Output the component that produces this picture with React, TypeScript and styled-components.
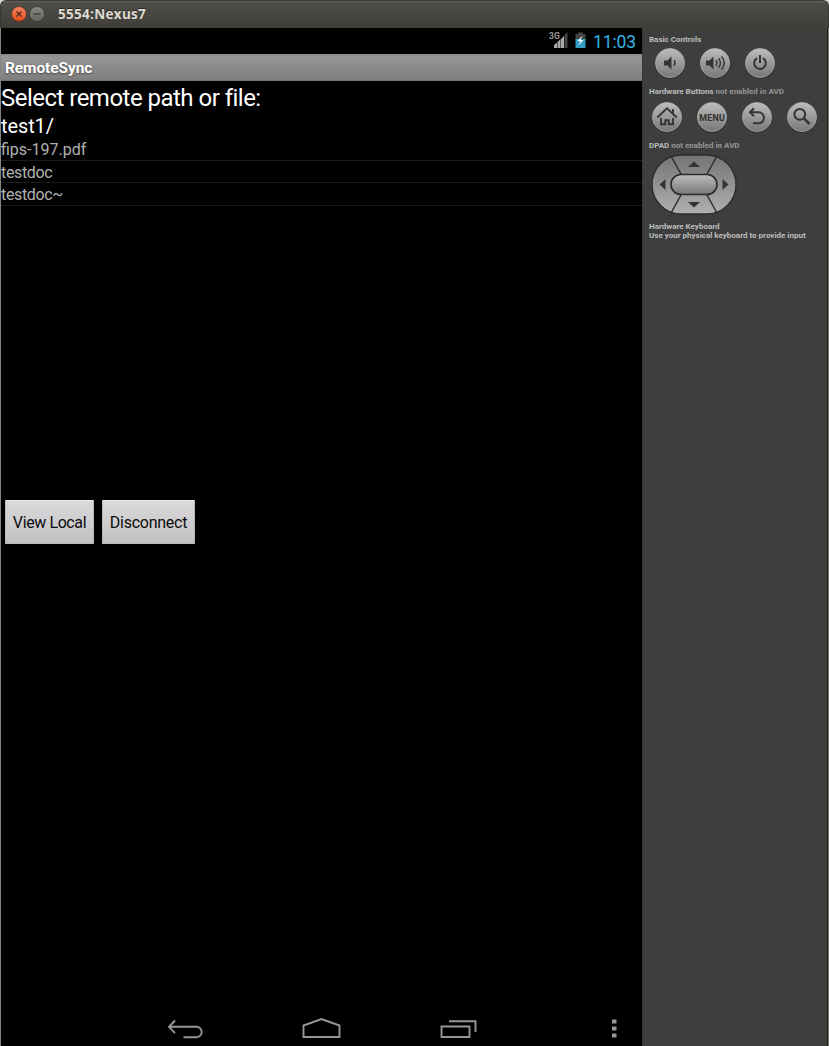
import React from 'react';
import styled, { createGlobalStyle } from 'styled-components';

const Global = createGlobalStyle`
  * { box-sizing: border-box; }
  body { margin: 0; background: #d8d8d8; font-family: Roboto, sans-serif; }
`;

const Window = styled.div`
  width: 829px;
  height: 1046px;
  display: flex;
  flex-direction: column;
  overflow: hidden;
  white-space: nowrap;
`;

const TitleBar = styled.header`
  height: 28px;
  flex: none;
  display: flex;
  align-items: center;
  padding: 0 0 1px 10px;
  border: 1px solid #3a3934;
  border-bottom: 0;
  border-radius: 6px 6px 0 0;
  background: linear-gradient(#65645c 0, #4e4d47 2px, #3e3d38 100%);
`;

const WindowTitle = styled.span`
  margin-left: 11px;
  font: 700 13.5px/20px 'Open Sans', sans-serif;
  color: #dfdbd2;
  letter-spacing: 0.3px;
  text-shadow: 0 -1px #282722;
`;

const WindowButton = styled.svg`
  width: 16px;
  height: 16px;
  margin-right: 2px;
`;

const Body = styled.div`
  flex: 1;
  display: flex;
  border-left: 1px solid #85847f;
  border-right: 1px solid #777772;
`;

const Screen = styled.main`
  width: 641px;
  display: flex;
  flex-direction: column;
  background: #000;
`;

const StatusBar = styled.div`
  height: 26px;
  display: flex;
  justify-content: flex-end;
  align-items: center;
  padding-right: 6px;
`;

const StatusIcons = styled.svg`
  width: 40px;
  height: 20px;
  margin-right: 4px;
`;

const Clock = styled.span`
  color: #33b5e5;
  font-size: 17.5px;
  line-height: 20px;
  padding-top: 2px;
  letter-spacing: -0.1px;
`;

const AppBar = styled.div`
  height: 27px;
  padding-left: 4px;
  background: linear-gradient(#858585, #969696 10%, #7f7f7f 94%, #6e6e6e);
  color: #fff;
  font-weight: 700;
  font-size: 15.5px;
  line-height: 28px;
  letter-spacing: -0.1px;
  text-shadow: 0 1px 2px #444;
`;

const Heading = styled.h1`
  margin: 0;
  height: 33px;
  font-weight: 400;
  font-size: 24px;
  line-height: 34px;
  letter-spacing: -0.52px;
  color: #fff;
`;

const Path = styled.div`
  height: 24px;
  font-size: 20px;
  line-height: 25px;
  letter-spacing: -0.1px;
  color: #fff;
`;

const FileList = styled.ul`
  list-style: none;
  margin: 0;
  padding: 0;
  height: 358px;
`;

const FileRow = styled.li<{ $spacing: number }>`
  height: 22.5px;
  border-bottom: 1px solid #1c1c1c;
  font-size: 16px;
  line-height: 24px;
  letter-spacing: ${(p) => p.$spacing}px;
  color: #b2b2b2;
`;

const Actions = styled.div`
  display: flex;
  gap: 8px;
  padding: 4px 4px 0;
`;

const ActionButton = styled.button<{ $width: number; $spacing: number }>`
  width: ${(p) => p.$width}px;
  height: 44px;
  padding: 1px 0 0;
  border: 1px solid #b9b9b9;
  border-top-color: #e9e9e9;
  border-radius: 1px;
  background: linear-gradient(#dad8da, #c3c2c3);
  color: #0b0b0b;
  font: 400 16px/20px Roboto, sans-serif;
  letter-spacing: ${(p) => p.$spacing}px;
  white-space: nowrap;
`;

const NavBar = styled.nav`
  height: 36px;
  margin-top: auto;
  display: flex;
  padding-left: 160px;
`;

const NavDrawing = styled.svg`
  width: 470px;
  height: 36px;
  fill: none;
  stroke: #969696;
  stroke-width: 1.9;
`;

const Panel = styled.aside`
  flex: 1;
  padding: 6px 0 0 6px;
  border-left: 1px solid #353535;
  border-right: 1px solid #202020;
  background: #3e3e3e;
`;

const Caption = styled.div`
  height: 11px;
  font-size: 8px;
  font-weight: 700;
  line-height: 11px;
  color: #bcbcbc;
`;

const Muted = styled.span`
  color: #969696;
`;

const KeyRow = styled.div<{ $indent: number; $height: number; $top: number }>`
  height: ${(p) => p.$height}px;
  padding: ${(p) => p.$top}px 0 0 ${(p) => p.$indent}px;
  display: flex;
  gap: 13px;
`;

const Key = styled.svg`
  width: 32px;
  height: 32px;
  flex: none;
  fill: none;
  stroke: #353535;
  stroke-width: 2;
`;

const MenuLabel = styled.text`
  font: 700 8.8px Roboto, sans-serif;
  fill: #303030;
  stroke: none;
  letter-spacing: 0.3px;
`;

const Pad = styled.svg`
  display: block;
  width: 88px;
  height: 64px;
  margin: 1px 0 6px 1px;
`;

const KeyboardNote = styled.div`
  font-size: 8px;
  font-weight: 700;
  line-height: 9px;
  color: #bcbcbc;
`;

function RoundKey({ children }: { children: React.ReactNode }) {
  return (
    <Key viewBox="0 0 32 32">
      <circle cx="16" cy="16.6" r="15.3" fill="#303030" stroke="none" />
      <circle cx="16" cy="16" r="14.6" fill="url(#keyFace)" stroke="#bdbdbd" strokeWidth=".6" />
      {children}
    </Key>
  );
}

function Gradients() {
  return (
    <defs>
      <linearGradient id="keyFace" x2="0" y2="1">
        <stop stopColor="#bdbdbd" />
        <stop offset="1" stopColor="#777" />
      </linearGradient>
      <linearGradient id="padFace" x2="0" y2="1">
        <stop stopColor="#747474" />
        <stop offset="1" stopColor="#b0b0b0" />
      </linearGradient>
      <linearGradient id="closeFace" x2="0" y2="1">
        <stop stopColor="#f58663" />
        <stop offset="1" stopColor="#df4b16" />
      </linearGradient>
      <linearGradient id="minFace" x2="0" y2="1">
        <stop stopColor="#8b8a82" />
        <stop offset="1" stopColor="#64635c" />
      </linearGradient>
    </defs>
  );
}

export default function App() {
  return (
    <Window>
      <Global />
      <TitleBar>
        <WindowButton viewBox="0 0 16 16">
          <Gradients />
          <circle cx="8" cy="8" r="7.5" fill="url(#closeFace)" stroke="#4d2d20" strokeWidth=".7" />
          <path d="M5.5 5.5l5 5M10.5 5.5l-5 5" stroke="#50281b" strokeWidth="1.2" />
        </WindowButton>
        <WindowButton viewBox="0 0 16 16">
          <circle cx="8" cy="8" r="7.5" fill="url(#minFace)" stroke="#393832" strokeWidth=".7" />
          <path d="M4.5 8h7" stroke="#34332e" strokeWidth="1.2" />
        </WindowButton>
        <WindowTitle>5554:Nexus7</WindowTitle>
      </TitleBar>
      <Body>
        <Screen>
          <StatusBar>
            <StatusIcons viewBox="0 0 40 20">
              <text x="0" y="8" fontSize="8.5" fontWeight="700" fill="#999" fontFamily="Roboto">3G</text>
              <path d="M5 17v-3l3-2.500v5.500zM8.500 17v-6l3-3V17zM12 17V8l3-3V17z" fill="#aaa" />
              <path d="M15.500 17V4l3-3v16z" fill="#454545" />
              <path d="M26.500 3h2.500V1.500h5V3h2.500v7h-10z" fill="#444" />
              <path d="M26.500 8h10v9h-10z" fill="#339dc2" />
              <path d="M33.500 4.500l-5 5.500h3l-2 4.500 5-5.500h-3z" fill="#fff" />
            </StatusIcons>
            <Clock>11:03</Clock>
          </StatusBar>
          <AppBar>RemoteSync</AppBar>
          <Heading>Select remote path or file:</Heading>
          <Path>test1/</Path>
          <FileList>
            <FileRow $spacing={0}>fips-197.pdf</FileRow>
            <FileRow $spacing={-0.35}>testdoc</FileRow>
            <FileRow $spacing={-0.35}>testdoc~</FileRow>
          </FileList>
          <Actions>
            <ActionButton $width={89} $spacing={-0.4}>View Local</ActionButton>
            <ActionButton $width={93} $spacing={-0.25}>Disconnect</ActionButton>
          </Actions>
          <NavBar>
            <NavDrawing viewBox="161 1010 470 36">
              <path d="M175 1020.500l-6 6.300 6 6.300M169 1026.800h27.500a5.200 5.200 0 0 1 0 10.400H183.500" />
              <path d="M303.500 1037v-11.500l18-6.500 18 6.500V1037z" />
              <path d="M441.500 1026.500h28v10.500h-28zM449 1021.300h26.500V1032" />
              <path d="M612 1019.500h4.500v4h-4.500zM612 1026.500h4.500v4h-4.500zM612 1033.500h4.500v4h-4.500z" fill="#969696" stroke="none" />
            </NavDrawing>
          </NavBar>
        </Screen>
        <Panel>
          <Caption>Basic Controls</Caption>
          <KeyRow $indent={5} $height={41} $top={2}>
            <RoundKey>
              <path d="M10 13.500h3.500l4-4v13l-4-4H10z" fill="#353535" stroke="none" />
              <path d="M20 13.300q2 2.700 0 5.400" strokeWidth="1.500" />
            </RoundKey>
            <RoundKey>
              <path d="M7 13.500h3.500l4-4v13l-4-4H7z" fill="#353535" stroke="none" />
              <path d="M17 13.300q2 2.700 0 5.400M19.500 11.300q4 4.700 0 9.400M22.500 9.500q5.500 6.500 0 13" strokeWidth="1.500" />
            </RoundKey>
            <RoundKey>
              <path d="M13 11.200a5.800 5.800 0 1 0 6 0M16 8v8" />
            </RoundKey>
          </KeyRow>
          <Caption>Hardware Buttons <Muted>not enabled in AVD</Muted></Caption>
          <KeyRow $indent={2} $height={43} $top={4}>
            <RoundKey>
              <path d="M6.300 16.500l9.700-9.200 9.700 9.200M22 12.500V8M10 17v6.300h4.300v-4h3.400v4H22V17" strokeWidth="1.900" />
            </RoundKey>
            <RoundKey>
              <MenuLabel x="16.200" y="19.500" textAnchor="middle">MENU</MenuLabel>
            </RoundKey>
            <RoundKey>
              <path d="M13 7.300l-4 4 4 4M9 11.300h8.500a5.500 5.500 0 0 1 0 11H12" />
            </RoundKey>
            <RoundKey>
              <circle cx="13.800" cy="13.300" r="5.400" />
              <path d="M17.800 17.300l5.700 5.700" strokeWidth="2.600" />
            </RoundKey>
          </KeyRow>
          <Caption>DPAD <Muted>not enabled in AVD</Muted></Caption>
          <Pad viewBox="0 0 88 64">
            <rect x="2" y="3" width="84" height="59" rx="29.500" fill="url(#padFace)" stroke="#2b2b2b" strokeWidth="1.300" />
            <path d="M21 4l10 18M67 4L57 22M21 61l10-18M67 61L57 43" stroke="#2b2b2b" strokeWidth="1.500" />
            <rect x="21" y="22.500" width="46" height="20" rx="10" fill="url(#keyFace)" stroke="#2b2b2b" strokeWidth="1.600" />
            <path d="M38 15l6-5.500 6 5.500zM38 50h12l-6 5.500zM15.500 27v11L9.500 32.500zM72.500 27v11l6-5.500z" fill="#333" />
          </Pad>
          <KeyboardNote>Hardware Keyboard<br />Use your physical keyboard to provide input</KeyboardNote>
        </Panel>
      </Body>
    </Window>
  );
}
